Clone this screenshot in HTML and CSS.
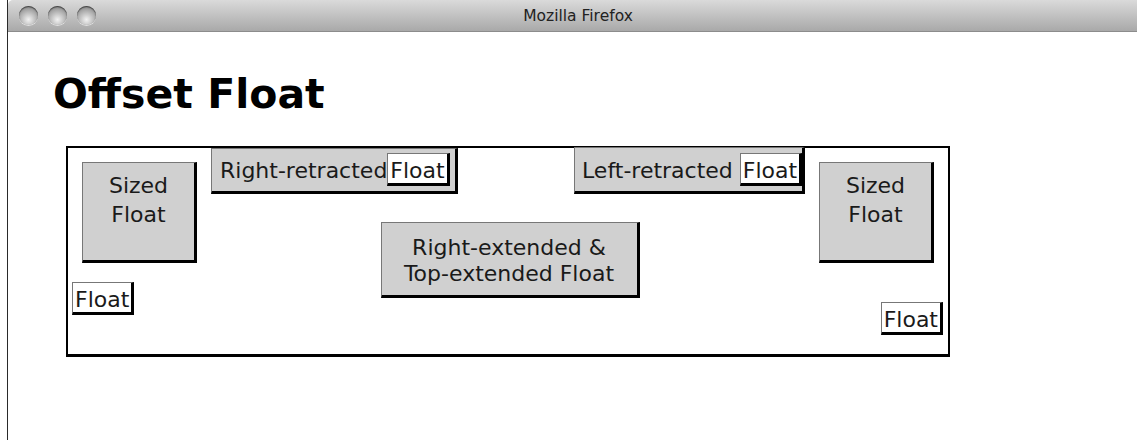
FILE: index.html
```html
<!DOCTYPE html>
<html lang="en">
<head>
    <meta charset="UTF-8">
    <title>Offset Float</title>
    <link rel="stylesheet" href="styles.css">
</head>
<body>
    <div class="window">
        <div class="titlebar">
            <div class="lights">
                <span class="light"></span>
                <span class="light"></span>
                <span class="light"></span>
            </div>
            <div class="title">Mozilla Firefox</div>
        </div>

        <div class="page">
            <h1>Offset Float</h1>

            <div class="container">
                <div class="side side-left">
                    <div class="box sized">Sized<br>Float</div>
                    <div class="mini">Float</div>
                </div>

                <div class="middle">
                    <div class="top-row">
                        <div class="box retract right-retract">Right-retracted<span class="mini">Float</span></div>
                        <div class="box retract left-retract">Left-retracted <span class="mini">Float</span></div>
                    </div>
                    <div class="box extended">Right-extended &amp;<br>Top-extended Float</div>
                </div>

                <div class="side side-right">
                    <div class="box sized">Sized<br>Float</div>
                    <div class="mini">Float</div>
                </div>
            </div>
        </div>
    </div>
</body>
</html>
```

FILE: styles.css
```css
body {
    margin: 0;
    font-family: "DejaVu Sans", Verdana, sans-serif;
    background-color: #fff;
    color: #1a1a1a;
}

.window {
    margin-left: 7px;
    height: 440px;
    border-left: 1px solid #2a2a2a;
    background-color: #fff;
}

.titlebar {
    height: 32px;
    box-sizing: border-box;
    display: flex;
    align-items: center;
    background: linear-gradient(#dadada, #a9a9a9);
    border-bottom: 1px solid #8c8c8c;
    border-top-left-radius: 5px;
}

.lights {
    display: flex;
    gap: 10px;
    padding-left: 11px;
}

.light {
    width: 19px;
    height: 19px;
    border-radius: 50%;
    background: radial-gradient(circle at 50% 72%, #f2f2f2, #a0a0a0 65%, #5e5e5e);
    box-shadow: inset 0 1px 1px #444, 0 1px 0 #e0e0e0;
}

.title {
    flex: 1;
    text-align: center;
    font-size: 15.5px;
    color: #222;
    padding-right: 77px;
}

.page {
    padding: 38px 0 0 45px;
}

h1 {
    margin: 0;
    font-size: 41px;
    font-weight: bold;
    color: #000;
    line-height: 48px;
}

.container {
    display: flex;
    margin: 28px 0 0 13px;
    width: 880px;
    height: 206px;
    border: 2px solid #000;
    border-bottom-width: 3px;
    font-size: 22px;
    white-space: nowrap;
}

.box {
    box-sizing: border-box;
    background-color: #d0d0d0;
    border-style: solid;
    border-width: 1px 3px 3px 1px;
    border-color: #777 #000 #000 #777;
    text-align: center;
}

.mini {
    display: inline-block;
    background-color: #fff;
    border-style: solid;
    border-width: 1px 3px 3px 1px;
    border-color: #777 #000 #000 #777;
    padding: 4px 2px 0;
    line-height: 25px;
}

.side {
    display: flex;
    flex-direction: column;
}

.side-left {
    align-items: flex-start;
}

.side-right {
    align-items: flex-end;
}

.sized {
    width: 115px;
    height: 101px;
    margin: 14px 14px 0;
    padding-top: 8px;
    line-height: 29px;
}

.side-left .mini {
    margin: 19px 0 0 4px;
}

.side-right .mini {
    margin: 39px 5px 0 0;
}

.middle {
    flex: 1;
    display: flex;
    flex-direction: column;
    align-items: center;
}

.top-row {
    align-self: stretch;
    display: flex;
    justify-content: space-between;
}

.retract {
    height: 46px;
    padding: 4px 0 5px;
    line-height: 25px;
    text-align: left;
}

.right-retract {
    width: 247px;
    padding-left: 8px;
}

.left-retract {
    width: 231px;
    height: 47px;
    margin-top: -1px;
    padding-top: 5px;
    padding-left: 7px;
}

.extended {
    margin: 28px 0 0 4px;
    width: 259px;
    height: 76px;
    padding-top: 12px;
    line-height: 26px;
}
```
